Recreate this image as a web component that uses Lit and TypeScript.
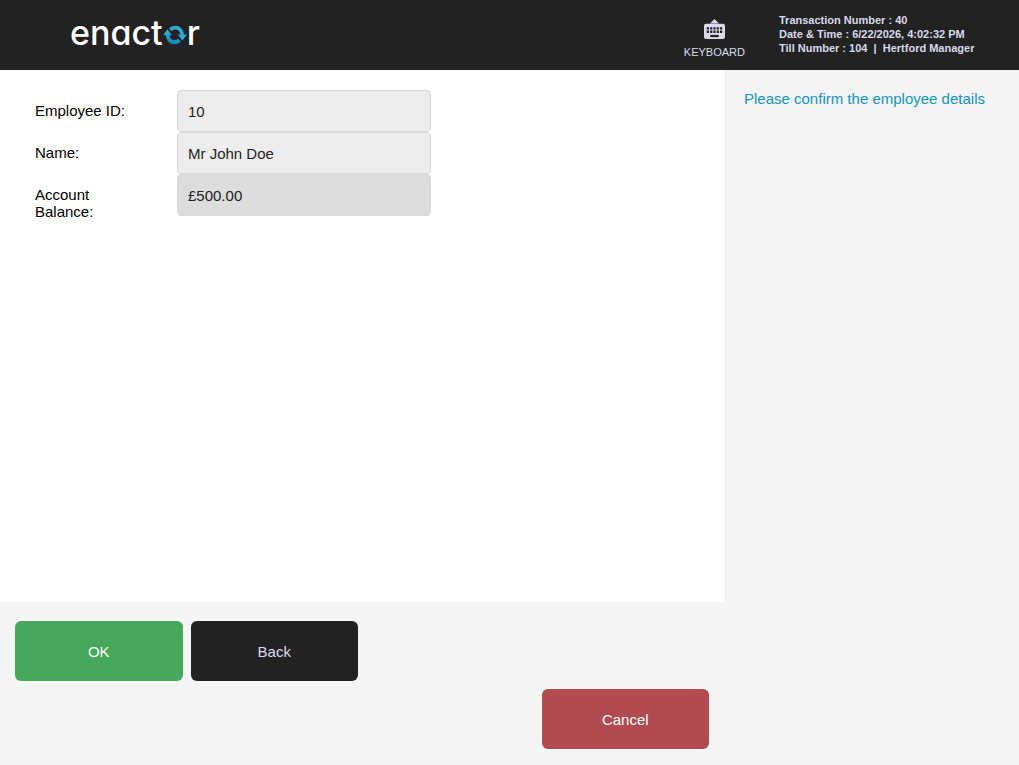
import { LitElement, html, css } from "lit";
import { customElement, state } from "lit/decorators.js";

interface Field {
  id: string;
  label: string;
  value: string;
  muted?: boolean;
}

@customElement("pos-logo")
class PosLogo extends LitElement {
  static styles = css`
    :host {
      display: flex;
      align-items: baseline;
      color: #fff;
      font: 500 34px/40px Inter, Lato, sans-serif;
      font-feature-settings: "cv11";
      padding-bottom: 4px;
    }
    .ring {
      display: block;
      width: 24px;
      height: 20px;
      margin-bottom: -1px;
    }
  `;

  render() {
    return html`
      <span>enact</span>
      <svg class="ring" viewBox="0 0 24 20" role="img" aria-label="o">
        <defs>
          <linearGradient id="shade" x1="0" y1="0" x2="0" y2="1">
            <stop offset="0" stop-color="#35b4de" />
            <stop offset="1" stop-color="#0b87b5" />
          </linearGradient>
        </defs>
        <path d="M6 3.4C10.5-1.4 20.2-.2 21 9.6H24L19.4 15.6 14.8 9.6H17.4C16.6 4.4 11.6 3.2 8.6 6.2Z" fill="#2dabd6" />
        <path d="M17.8 16.4C13.3 21.4 3.6 20 2.9 10.2H0L4.5 4.2 9 10.2H6.5C7.2 15.6 12.2 16.6 15.2 13.6Z" fill="url(#shade)" />
      </svg>
      <span>r</span>
    `;
  }
}

@customElement("app-root")
class AppRoot extends LitElement {
  static styles = css`
    :host {
      display: block;
      font: 15px/17px "Liberation Sans", Arial, sans-serif;
      color: #000;
    }
    .page {
      display: grid;
      grid-template: auto 1fr auto / 1fr 295px;
      min-height: 100vh;
      background: #f4f4f4;
    }
    .header {
      grid-column: 1 / -1;
      display: grid;
      grid-template-columns: 1fr auto 240px;
      align-items: center;
      height: 70px;
      padding-left: 70px;
      background: #222;
      color: #dadaeb;
    }
    .keyboard {
      display: flex;
      flex-direction: column;
      align-items: center;
      gap: 6px;
      margin: 8px 34px 0 0;
      padding: 0;
      border: 0;
      background: none;
      color: inherit;
      font: 11px/13px "Liberation Sans", Arial, sans-serif;
      cursor: pointer;
    }
    .keyboard svg {
      display: block;
    }
    .status {
      font-size: 11px;
      font-weight: bold;
      line-height: 14px;
      padding-bottom: 2px;
    }
    .status p {
      margin: 0;
    }
    .form {
      padding: 20px 35px;
      background: #fff;
    }
    .row {
      display: grid;
      grid-template-columns: 102px minmax(0, 254px);
      column-gap: 40px;
      height: 42px;
    }
    .row label {
      padding-top: 12px;
    }
    .row input {
      box-sizing: border-box;
      width: 100%;
      height: 42px;
      margin: 0;
      padding: 0 10px;
      border: 1px solid #d7d7df;
      border-radius: 4px;
      background: #ededed;
      color: #222;
      font: inherit;
      outline: none;
    }
    .row input.muted {
      background: #dcdcdc;
    }
    .prompt {
      grid-row: 2 / 4;
      grid-column: 2;
      margin: 0;
      padding: 20px;
      color: #1495bd;
    }
    .actions {
      display: grid;
      grid-template-columns: repeat(4, 1fr);
      grid-auto-rows: 60px;
      gap: 8px;
      padding: 19px 15px 16px;
    }
    .action {
      border: 0;
      border-radius: 6px;
      background: #222;
      color: #dadaeb;
      font: inherit;
      cursor: pointer;
    }
    .ok {
      background: #45a85b;
      color: #fff;
    }
    .cancel {
      grid-area: 2 / 4;
      background: #b24a51;
      color: #fff;
    }
  `;

  @state()
  private fields: Field[] = [
    { id: "employee-id", label: "Employee ID:", value: "10" },
    { id: "name", label: "Name:", value: "Mr John Doe" },
    { id: "balance", label: "Account Balance:", value: "£500.00", muted: true },
  ];

  render() {
    return html`
      <div class="page">
        <header class="header">
          <pos-logo></pos-logo>
          <button class="keyboard" type="button">
            <svg width="21" height="21" viewBox="0 0 21 21" aria-hidden="true">
              <path d="M10.5 0L15 4.4H6Z" fill="currentColor" />
              <rect y="4.7" width="21" height="15.3" rx="2" fill="currentColor" />
              <path
                d="M2.8 9.4H18.4M2.8 12.8H18.4"
                stroke="#222"
                stroke-width="2.4"
                stroke-dasharray="2.2 1.1"
              />
              <path d="M6.3 17H14.7" stroke="#222" stroke-width="2.2" />
            </svg>
            KEYBOARD
          </button>
          <div class="status">
            <p>Transaction Number : 40</p>
            <p>Date &amp; Time : 6/22/2026, 4:02:32 PM</p>
            <p>Till Number : 104 &nbsp;|&nbsp; Hertford Manager</p>
          </div>
        </header>
        <main class="form">
          ${this.fields.map(
            (f) => html`
              <div class="row">
                <label for=${f.id}>${f.label}</label>
                <input id=${f.id} class=${f.muted ? "muted" : ""} .value=${f.value} readonly />
              </div>
            `
          )}
        </main>
        <p class="prompt">Please confirm the employee details</p>
        <footer class="actions">
          <button class="action ok" type="button">OK</button>
          <button class="action" type="button">Back</button>
          <button class="action cancel" type="button">Cancel</button>
        </footer>
      </div>
    `;
  }
}
